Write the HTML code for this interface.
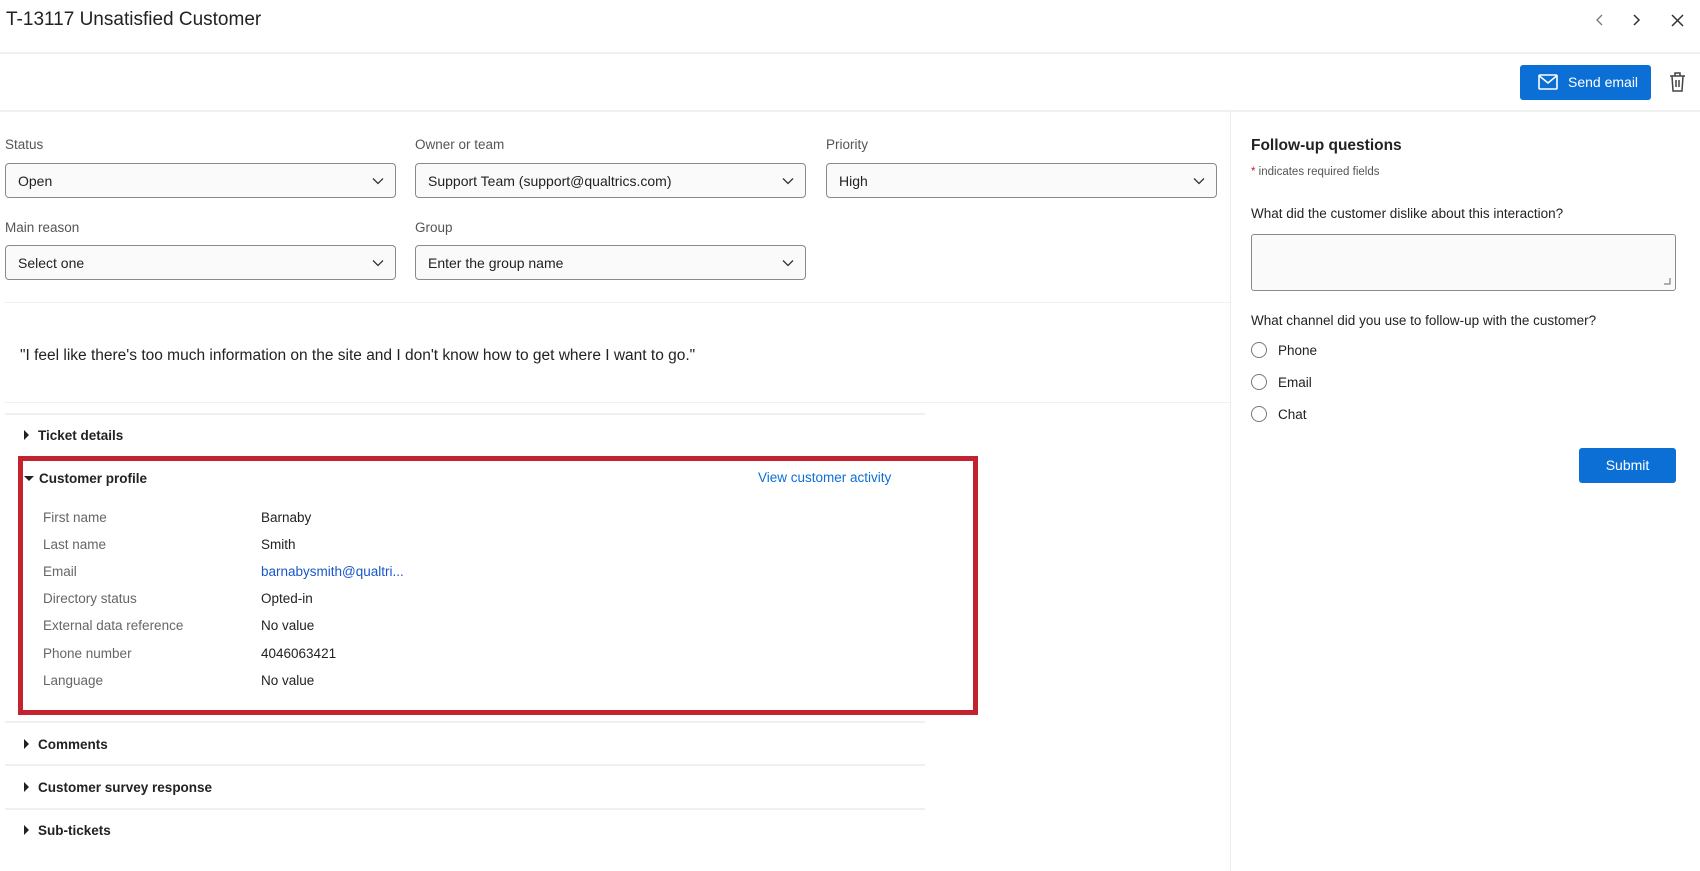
<!DOCTYPE html>
<html><head><meta charset="utf-8"><style>
*{box-sizing:border-box;margin:0;padding:0}
body{width:1700px;height:866px;overflow:hidden;background:#fff;font-family:"Liberation Sans",Arial,sans-serif;color:#1a1a1a;position:relative}
.a{position:absolute;white-space:nowrap}
.hl{position:absolute;height:2px;background:#f0f0f0}
.lbl{font-size:13.5px;color:#555}
.sel{position:absolute;height:35px;border:1px solid #8a8a8a;border-radius:4px;background:#fafafa;font-size:14px;padding:0 12px;line-height:34px;color:#222}
.sel svg{position:absolute;right:11px;top:13px}
.acc{font-size:13.5px;font-weight:bold;color:#222}
.tri{display:inline-block;width:0;height:0;border-top:5px solid transparent;border-bottom:5px solid transparent;border-left:5px solid #222;margin-right:9px;vertical-align:0px}
.k{font-size:13.5px;color:#666}
.v{font-size:13.5px;color:#222}
.rad{position:absolute;width:16px;height:16px;border:1.5px solid #777;border-radius:50%}
</style></head><body>
<div class="a" style="left:6px;top:9px;font-size:19px;color:#222">T-13117 Unsatisfied Customer</div>
<svg class="a" style="left:1593px;top:13px" width="14" height="14" viewBox="0 0 14 14"><path d="M9 2L4 7l5 5" fill="none" stroke="#777" stroke-width="1.3"/></svg>
<svg class="a" style="left:1629px;top:13px" width="14" height="14" viewBox="0 0 14 14"><path d="M5 2l5 5-5 5" fill="none" stroke="#333" stroke-width="1.5"/></svg>
<svg class="a" style="left:1670px;top:13px" width="15" height="15" viewBox="0 0 15 15"><path d="M2 2l11 11M13 2L2 13" fill="none" stroke="#333" stroke-width="1.5"/></svg>
<div class="hl" style="left:0;top:52px;width:1700px"></div>
<div class="a" style="left:1520px;top:65px;width:131px;height:35px;background:#0b6fd6;border-radius:3px;color:#fff;font-size:14px;line-height:35px;padding-left:48px">Send email</div>
<svg class="a" style="left:1538px;top:74px" width="20" height="16" viewBox="0 0 20 16"><rect x="1" y="1" width="18" height="14" rx="1" fill="none" stroke="#fff" stroke-width="1.6"/><path d="M1.5 2l8.5 7 8.5-7" fill="none" stroke="#fff" stroke-width="1.6"/></svg>
<svg class="a" style="left:1669px;top:71px" width="17" height="22" viewBox="0 0 17 22"><path d="M1 5h15M6 5V2h5v3M3 5l1 15h9l1-15M7 9v7M10 9v7" fill="none" stroke="#444" stroke-width="1.5"/></svg>
<div class="hl" style="left:0;top:110px;width:1700px"></div>
<div class="a" style="left:1230px;top:111px;width:1px;height:760px;background:#ececec"></div>

<div class="a lbl" style="left:5px;top:137px">Status</div>
<div class="a lbl" style="left:415px;top:137px">Owner or team</div>
<div class="a lbl" style="left:826px;top:137px">Priority</div>
<div class="sel" style="left:5px;top:163px;width:391px">Open<svg width="12" height="8" viewBox="0 0 12 8"><path d="M1 1.5l5 5 5-5" fill="none" stroke="#333" stroke-width="1.3"/></svg></div>
<div class="sel" style="left:415px;top:163px;width:391px">Support Team (support@qualtrics.com)<svg width="12" height="8" viewBox="0 0 12 8"><path d="M1 1.5l5 5 5-5" fill="none" stroke="#333" stroke-width="1.3"/></svg></div>
<div class="sel" style="left:826px;top:163px;width:391px">High<svg width="12" height="8" viewBox="0 0 12 8"><path d="M1 1.5l5 5 5-5" fill="none" stroke="#333" stroke-width="1.3"/></svg></div>
<div class="a lbl" style="left:5px;top:220px">Main reason</div>
<div class="a lbl" style="left:415px;top:220px">Group</div>
<div class="sel" style="left:5px;top:245px;width:391px">Select one<svg width="12" height="8" viewBox="0 0 12 8"><path d="M1 1.5l5 5 5-5" fill="none" stroke="#333" stroke-width="1.3"/></svg></div>
<div class="sel" style="left:415px;top:245px;width:391px">Enter the group name<svg width="12" height="8" viewBox="0 0 12 8"><path d="M1 1.5l5 5 5-5" fill="none" stroke="#333" stroke-width="1.3"/></svg></div>
<div class="hl" style="left:5px;top:302px;width:1225px;height:1px"></div>
<div class="a" style="left:20px;top:347px;font-size:15.5px;color:#222">"I feel like there's too much information on the site and I don't know how to get where I want to go."</div>
<div class="hl" style="left:5px;top:402px;width:1225px;height:1px"></div>
<div class="hl" style="left:5px;top:413px;width:920px"></div>
<div class="a acc" style="left:24px;top:428px"><span class="tri"></span>Ticket details</div>

<div class="a" style="left:18px;top:456px;width:960px;height:259px;border:5px solid #c3232f"></div>
<div class="a acc" style="left:24px;top:471px"><span class="tri" style="border-left:5px solid transparent;border-right:5px solid transparent;border-top:5px solid #222;border-bottom:0;margin-right:5px;vertical-align:2px"></span>Customer profile</div>
<div class="a" style="left:758px;top:470px;font-size:13.5px;color:#0b6fd6">View customer activity</div>
<div class="a k" style="left:43px;top:510px">First name</div><div class="a v" style="left:261px;top:510px">Barnaby</div>
<div class="a k" style="left:43px;top:537px">Last name</div><div class="a v" style="left:261px;top:537px">Smith</div>
<div class="a k" style="left:43px;top:564px">Email</div><div class="a v" style="left:261px;top:564px;color:#1a56c9">barnabysmith@qualtri...</div>
<div class="a k" style="left:43px;top:591px">Directory status</div><div class="a v" style="left:261px;top:591px">Opted-in</div>
<div class="a k" style="left:43px;top:618px">External data reference</div><div class="a v" style="left:261px;top:618px">No value</div>
<div class="a k" style="left:43px;top:646px">Phone number</div><div class="a v" style="left:261px;top:646px">4046063421</div>
<div class="a k" style="left:43px;top:673px">Language</div><div class="a v" style="left:261px;top:673px">No value</div>

<div class="hl" style="left:5px;top:721px;width:920px"></div>
<div class="a acc" style="left:24px;top:737px"><span class="tri"></span>Comments</div>
<div class="hl" style="left:5px;top:764px;width:920px"></div>
<div class="a acc" style="left:24px;top:780px"><span class="tri"></span>Customer survey response</div>
<div class="hl" style="left:5px;top:808px;width:920px"></div>
<div class="a acc" style="left:24px;top:823px"><span class="tri"></span>Sub-tickets</div>

<div class="a" style="left:1251px;top:137px;font-size:15.5px;font-weight:bold;color:#222">Follow-up questions</div>
<div class="a" style="left:1251px;top:166px;font-size:11.5px;color:#555"><span style="color:#c3232f">*</span> indicates required fields</div>
<div class="a" style="left:1251px;top:206px;font-size:13.5px;color:#222">What did the customer dislike about this interaction?</div>
<div class="a" style="left:1251px;top:234px;width:425px;height:57px;border:1px solid #8a8a8a;border-radius:3px;background:#fafafa"></div>
<svg class="a" style="left:1664px;top:278px" width="7" height="7" viewBox="0 0 7 7"><path d="M6 0v6H0" fill="none" stroke="#666" stroke-width="1"/></svg>
<div class="a" style="left:1251px;top:313px;font-size:13.5px;color:#222">What channel did you use to follow-up with the customer?</div>
<div class="rad" style="left:1251px;top:342px"></div><div class="a v" style="left:1278px;top:343px">Phone</div>
<div class="rad" style="left:1251px;top:374px"></div><div class="a v" style="left:1278px;top:375px">Email</div>
<div class="rad" style="left:1251px;top:406px"></div><div class="a v" style="left:1278px;top:407px">Chat</div>
<div class="a" style="left:1579px;top:448px;width:97px;height:35px;background:#0b6fd6;border-radius:3px;color:#fff;font-size:14px;line-height:35px;text-align:center">Submit</div>
</body></html>
